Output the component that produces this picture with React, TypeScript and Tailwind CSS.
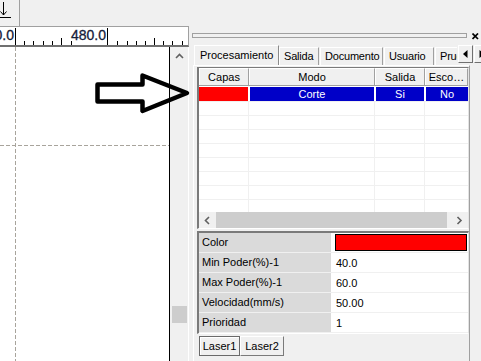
import React from "react";

const minorTicks = [24, 33, 43, 52, 71, 117, 127, 136, 145, 163, 172, 182];
const medTicks = [61, 154];
const majorTicks = [15, 107];

function Chevron({ dir }: { dir: "left" | "right" | "up" }) {
  const pts =
    dir === "left" ? "5,1 1.5,4.5 5,8" : dir === "right" ? "1.5,1 5,4.5 1.5,8" : "1,5 4.5,1.5 8,5";
  const w = dir === "up" ? 9 : 7;
  const h = dir === "up" ? 7 : 9;
  return (
    <svg width={w} height={h} viewBox={`0 0 ${w} ${h}`}>
      <polyline points={pts} fill="none" stroke="#606060" strokeWidth="1.6" />
    </svg>
  );
}

function Tab({ label, w, ml = "" }: { label: string; w: string; ml?: string }) {
  return (
    <div
      className={`${w} ${ml} h-[18px] shrink-0 border-l border-t border-white border-r border-r-[#a0a0a0] flex items-center pl-[4px] tracking-[-0.2px] whitespace-nowrap overflow-hidden`}
    >
      {label}
    </div>
  );
}

export default function App() {
  const rows = [
    { k: "Min Poder(%)-1", v: "40.0" },
    { k: "Max Poder(%)-1", v: "60.0" },
    { k: "Velocidad(mm/s)", v: "50.00" },
    { k: "Prioridad", v: "1" },
  ];
  return (
    <div className="relative w-[481px] h-[361px] overflow-hidden bg-[#f0f0f0] font-['Liberation_Sans',Arial,sans-serif] text-[11px] leading-none text-black flex flex-col">
      {/* toolbar */}
      <div className="h-[26px] shrink-0 flex">
        <div className="w-[20px] h-full border-r border-[#a0a0a0] relative">
          <svg width="14" height="20" className="absolute left-0 top-0">
            <line x1="3.5" y1="2" x2="3.5" y2="15" stroke="#000" strokeWidth="1" />
            <polyline points="0.5,11.5 3.5,15 6.5,11.5" fill="none" stroke="#000" strokeWidth="1" />
            <line x1="0" y1="17.5" x2="11" y2="17.5" stroke="#000" strokeWidth="1" />
          </svg>
        </div>
      </div>

      <div className="flex flex-1 min-h-0">
        {/* left: ruler + canvas */}
        <div className="w-[189px] shrink-0 flex flex-col border-t border-[#a0a0a0]">
          <div className="h-[20px] shrink-0 bg-white border-b-2 border-b-[#707070] border-r border-r-[#a0a0a0] overflow-hidden">
            <svg width="188" height="18" className="block">
              {majorTicks.map((x) => (
                <line key={`M${x}`} x1={x + 0.5} y1="1" x2={x + 0.5} y2="18" stroke="#000" />
              ))}
              {medTicks.map((x) => (
                <line key={`m${x}`} x1={x + 0.5} y1="11" x2={x + 0.5} y2="18" stroke="#000" />
              ))}
              {minorTicks.map((x) => (
                <line key={`t${x}`} x1={x + 0.5} y1="14" x2={x + 0.5} y2="18" stroke="#000" />
              ))}
              <text x="14" y="13" textAnchor="end" fontSize="14" fill="#15203a" stroke="#15203a" strokeWidth="0.3" fontFamily="Liberation Sans, Arial, sans-serif">
                0.0
              </text>
              <text x="106" y="13" textAnchor="end" fontSize="14" fill="#15203a" stroke="#15203a" strokeWidth="0.3" fontFamily="Liberation Sans, Arial, sans-serif">
                480.0
              </text>
            </svg>
          </div>
          <div className="flex flex-1 min-h-0">
            <div className="w-[170px] shrink-0 bg-white border-r border-black relative overflow-hidden">
              <svg width="169" height="314" className="absolute left-0 top-0">
                <line x1="15.5" y1="0" x2="15.5" y2="314" stroke="#a8a49c" strokeDasharray="4 2" />
                <line x1="0" y1="98.5" x2="169" y2="98.5" stroke="#a8a49c" strokeDasharray="4 2" />
              </svg>
            </div>
            <div className="w-[19px] shrink-0 border-r border-white flex flex-col items-center">
              <div className="mt-[6px]">
                <Chevron dir="up" />
              </div>
              <div className="flex-1" />
              <div className="w-[15px] h-[17px] bg-[#cdcdcd] mb-[38px]" />
            </div>
          </div>
        </div>

        {/* right panel */}
        <div className="flex-1 min-w-0 flex flex-col pl-[3px]">
          {/* header grip */}
          <div className="h-[17px] shrink-0 flex items-start pt-[7px]">
            <div className="w-[275px] h-[5px] border-y border-[#a0a0a0] border-x border-x-[#a0a0a0] bg-[#f0f0f0]" />
            <svg width="7" height="7" className="ml-[5px] mt-[-0.5px]">
              <line x1="0.5" y1="0.5" x2="6" y2="6" stroke="#000" strokeWidth="1.7" />
              <line x1="6" y1="0.5" x2="0.5" y2="6" stroke="#000" strokeWidth="1.7" />
            </svg>
          </div>

          {/* tabs */}
          <div className="h-[22px] shrink-0 flex items-end">
            <div className="w-[265px] shrink-0 flex items-end overflow-hidden">
              <div className="ml-[2px] w-[85px] h-[21px] mb-[-1px] shrink-0 border-l border-t border-white border-r border-r-[#8a8a8a] bg-[#f0f0f0] flex items-center pl-[5px] pb-[2px] relative z-10 whitespace-nowrap">
                Procesamiento
              </div>
              <Tab label="Salida" w="w-[40px]" />
              <Tab label="Documento" w="w-[63px]" ml="ml-[1px]" />
              <Tab label="Usuario" w="w-[50px]" ml="ml-[1px]" />
              <Tab label="Pruebas" w="w-[60px]" ml="ml-[1px]" />
            </div>
            <div className="ml-[1px] mb-[2px] w-[15px] h-[18px] shrink-0 border-l border-t border-white border-r border-b border-r-[#707070] border-b-[#707070] flex items-center justify-center">
              <svg width="5" height="8">
                <polygon points="4.5,0 0,4 4.5,8" fill="#000" />
              </svg>
            </div>
            <div className="ml-[1px] mb-[2px] w-[15px] h-[18px] shrink-0 border-l border-t border-white border-r border-b border-r-[#707070] border-b-[#707070] flex items-center justify-center">
              <svg width="5" height="8">
                <polygon points="0.5,0 5,4 0.5,8" fill="#000" />
              </svg>
            </div>
          </div>

          {/* tab page */}
          <div className="ml-[1px] w-[277px] flex-1 min-h-0 border-t border-l border-white border-r border-r-[#a0a0a0] pl-[3px] pt-[1px] flex flex-col">
            {/* table */}
            <div className="w-[272px] h-[162px] shrink-0 border-l-2 border-t border-[#7a7a7a] border-r border-r-[#e3e3e3] border-b border-b-white flex flex-col bg-white">
              <div className="h-[18px] shrink-0 flex border-b border-[#a0a0a0] bg-[#f0f0f0]">
                {[
                  ["Capas", "w-[50px]"],
                  ["Modo", "w-[126px]"],
                  ["Salida", "w-[50px]"],
                  ["Esco…", "w-[43px]"],
                ].map(([t, w]) => (
                  <div
                    key={t}
                    className={`${w} shrink-0 h-full border-t border-l border-white border-r border-r-[#a0a0a0] flex items-center justify-center`}
                  >
                    {t}
                  </div>
                ))}
              </div>
              <div className="flex-1 min-h-0 overflow-hidden">
                <div className="h-[16px] flex border-t border-white border-b border-b-[#f0f0f0] text-white">
                  <div className="w-[50px] shrink-0 bg-[#ff0000] border-r border-white" />
                  <div className="w-[126px] shrink-0 bg-[#0000c8] border-x border-white flex items-center justify-center">
                    Corte
                  </div>
                  <div className="w-[50px] shrink-0 bg-[#0000c8] border-x border-white flex items-center justify-center">
                    Si
                  </div>
                  <div className="w-[43px] shrink-0 bg-[#0000c8] border-l border-white flex items-center justify-center">
                    No
                  </div>
                </div>
                {Array.from({ length: 9 }).map((_, i) => (
                  <div key={i} className="h-[14px] flex border-b border-[#f0f0f0]">
                    <div className="w-[50px] shrink-0 border-r border-[#f0f0f0]" />
                    <div className="w-[126px] shrink-0 border-r border-[#f0f0f0]" />
                    <div className="w-[50px] shrink-0 border-r border-[#f0f0f0]" />
                    <div className="w-[43px] shrink-0" />
                  </div>
                ))}
              </div>
              <div className="h-[16px] shrink-0 flex bg-[#f0f0f0]">
                <div className="w-[17px] shrink-0 flex items-center justify-center">
                  <Chevron dir="left" />
                </div>
                <div className="w-[231px] shrink-0 bg-[#cdcdcd]" />
                <div className="flex-1 flex items-center justify-center pl-[3px]">
                  <Chevron dir="right" />
                </div>
              </div>
            </div>

            {/* property grid */}
            <div className="mt-[2px] w-[272px] shrink-0 border-l-2 border-t-2 border-[#7a7a7a] border-r border-r-[#e3e3e3] border-b border-b-white bg-white">
              <div className="h-[20px] flex border-b border-[#f0f0f0]">
                <div className="w-[132px] shrink-0 bg-[#dadada] flex items-center pl-[3px]">Color</div>
                <div className="flex-1 pl-[4px] pr-[1px] pt-[1px]">
                  <div className="h-[17px] bg-[#ff0000] border border-black" />
                </div>
              </div>
              {rows.map((r) => (
                <div key={r.k} className="h-[20px] flex border-b border-[#f0f0f0]">
                  <div className="w-[132px] shrink-0 bg-[#dadada] flex items-center pl-[3px]">{r.k}</div>
                  <div className="flex-1 flex items-center pl-[5px] pt-[2px]">{r.v}</div>
                </div>
              ))}
            </div>

            {/* bottom tabs */}
            <div className="mt-[2px] pl-[2px] flex">
              <div className="w-[41px] h-[20px] border border-[#6a6a6a] shadow-[inset_1px_1px_0_#ffffff] bg-[#f0f0f0] flex items-center justify-center">
                Laser1
              </div>
              <div className="w-[44px] h-[20px] border-l border-t border-white border-r border-b border-r-[#7a7a7a] border-b-[#7a7a7a] bg-[#f0f0f0] flex items-center justify-center">
                Laser2
              </div>
            </div>
          </div>
        </div>
      </div>

      {/* arrow annotation */}
      <svg width="481" height="361" className="absolute left-0 top-0 pointer-events-none">
        <polygon
          points="97.5,84.5 142.5,84.5 142.5,75.5 187,93 142.5,111 142.5,101.5 97.5,101.5"
          fill="none"
          stroke="#000"
          strokeWidth="4.5"
          strokeLinejoin="round"
        />
      </svg>
    </div>
  );
}
